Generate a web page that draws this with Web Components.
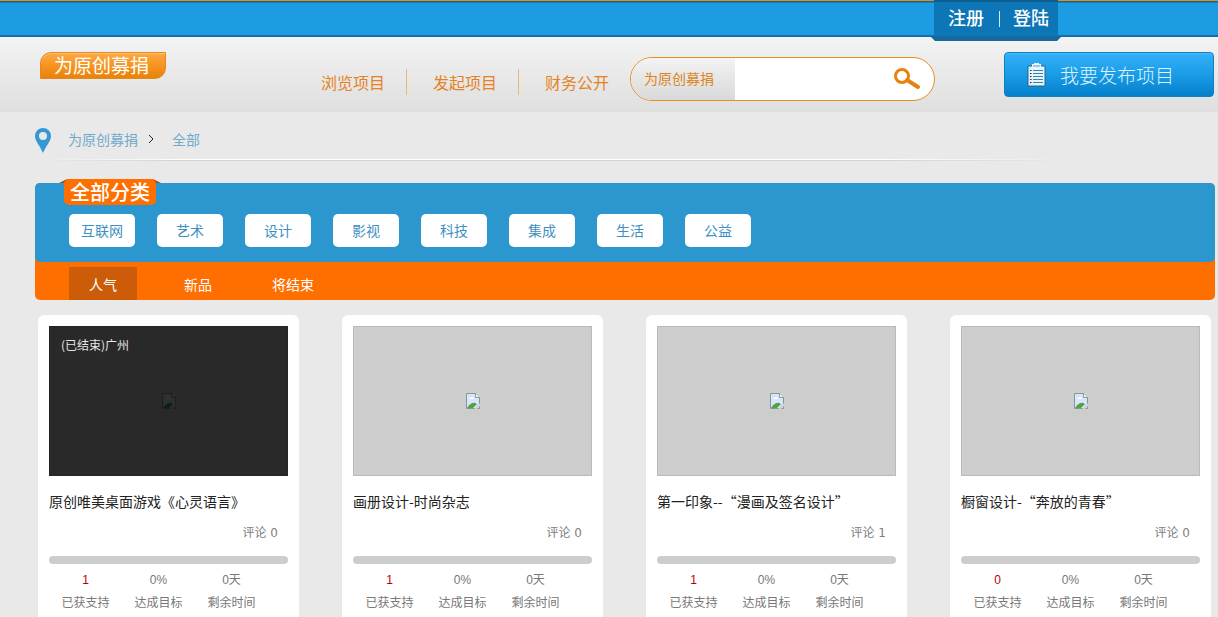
<!DOCTYPE html>
<html lang="zh-CN">
<head>
<meta charset="utf-8">
<title>为原创募捐</title>
<style>
html,body{margin:0}
body{font-family:"Noto Sans CJK SC","Liberation Sans",sans-serif;font-size:14px;background:#e9e9e9}
</style>
</head>
<body>
<fund-page></fund-page>
<script>
const define = (name, html, setup) => {
  const template = document.createElement('template');
  template.innerHTML = html;
  customElements.define(name, class extends HTMLElement {
    constructor() {
      super();
      this.attachShadow({mode: 'open'}).append(template.content.cloneNode(true));
    }
    connectedCallback() { if (setup) setup(this, this.shadowRoot); }
  });
};

define('account-bar', `
<style>
:host{display:block;position:relative;z-index:1;height:37px;box-sizing:border-box;padding-left:934px;background:linear-gradient(#b79a58 0 1px,#40565a 1px 2px,#1b7fb8 2px 3px,#1b9ce3 3px 35px,#186ea6 35px)}
nav{position:relative;display:flex;box-sizing:border-box;width:124px;height:37px;padding-left:14px;background:linear-gradient(#0d5f93 0 2px,#0c76b6 2px)}
nav::after{content:"";position:absolute;left:-4px;right:-4px;top:36px;height:5px;background:#1868a0;clip-path:polygon(0 0,100% 0,calc(100% - 5px) 100%,5px 100%)}
a{color:#fff;font-size:18px;font-weight:500;line-height:34px;text-decoration:none;white-space:nowrap}
a+a{margin-left:15px;padding-left:14px;background:linear-gradient(#d5eaf6,#d5eaf6) left 0 top 11px/1px 16px no-repeat}
</style>
<nav><a href="#register">注册</a><a href="#login">登陆</a></nav>`);

define('site-logo', `
<style>
:host{display:block}
a{display:block;box-sizing:border-box;width:126px;height:27px;padding-left:13px;border:1px solid #e58a1c;border-radius:11px 0 11px 0;background:linear-gradient(#fda944,#f7941f 50%,#e7830c);box-shadow:inset 0 1px #ffc274;color:#fff;font-size:19px;line-height:24px;text-decoration:none;white-space:nowrap}
</style>
<a href="#home"><slot></slot></a>`);

define('main-nav', `
<style>
:host{display:flex}
::slotted(a){padding:0 21px 0 26px;border-left:1px solid #efb47c;color:#e5821f;font-size:16px;line-height:26px;text-decoration:none;white-space:nowrap}
::slotted(a:first-child){padding-left:0;border:0}
::slotted(a:last-child){padding-right:0}
</style>
<slot></slot>`);

define('search-box', `
<style>
:host{display:block}
form{display:flex;box-sizing:border-box;width:305px;height:44px;border:1px solid #e88d25;border-radius:22px;background:#fff;overflow:hidden}
label{flex:none;box-sizing:border-box;width:104px;padding-left:13px;background:linear-gradient(#f3f3f3,#d9d9d9);color:#dc8522;font-size:14px;line-height:40px}
input{flex:1;min-width:0;border:0;padding:0 8px;outline:0;background:none;font:inherit}
button{flex:none;width:54px;border:0;padding:0;background:none}
svg{display:block;margin:0 12px 0 13px}
</style>
<form role="search">
<label for="q">为原创募捐</label><input id="q" type="text">
<button type="button" aria-label="搜索"><svg width="28" height="24" viewBox="0 0 28 24" fill="none" stroke="#e8820f"><circle cx="9" cy="9" r="6.500" stroke-width="3"/><path d="M14 13L25 20" stroke-width="4" stroke-linecap="round"/></svg></button>
</form>`);

define('publish-button', `
<style>
:host{display:block}
button{display:flex;align-items:center;gap:14px;width:210px;height:45px;box-sizing:border-box;padding:0 0 0 22px;border:1px solid #0f80c4;border-radius:4px;background:linear-gradient(#34b1f7,#1a9ce6 50%,#0580cb);box-shadow:inset 0 1px #4dbafa;color:#dff4ff;font-family:inherit;font-size:19px;font-weight:300;white-space:nowrap}
</style>
<button type="button"><svg width="19" height="24" viewBox="0 0 19 24"><path d="M1 3H5V1H7V0H12V1H14V3H18V23H1Z" fill="#e6f5fd"/><path d="M1 23V3H5M14 3H18V23H1" fill="none" stroke="#23648e"/><path d="M6 3H13" stroke="#5b9dc4"/><path d="M3 7.5H4.500M3 10.500H4.500M3 13.500H4.500M3 16.500H4.500M3 19.500H4.500" stroke="#222"/><path d="M6 7.500H16M6 10.500H16M6 13.500H16M6 16.500H16M6 19.500H16" stroke="#3684b2"/></svg><slot></slot></button>`);

define('site-header', `
<style>
:host{display:flex;align-items:flex-start;box-sizing:border-box;height:75px;padding:15px 4px 0 40px;background:linear-gradient(#f3f3f3,#dfdfdf)}
main-nav{margin:17px 21px 0 155px}
search-box{margin-top:5px}
publish-button{margin-left:auto}
</style>
<site-logo>为原创募捐</site-logo>
<main-nav><a href="#browse">浏览项目</a><a href="#start">发起项目</a><a href="#finance">财务公开</a></main-nav>
<search-box></search-box>
<publish-button>我要发布项目</publish-button>`);

define('crumb-trail', `
<style>
:host{display:block;margin-left:35px}
nav{display:flex;align-items:center;box-sizing:border-box;height:47px;padding-top:6px}
a{color:#72a9cb;font-size:14px;line-height:20px;text-decoration:none}
.pin{margin:4px 17px 0 0}
.arrow{margin:0 18px 0 10px}
hr{width:1040px;max-width:100%;height:2px;margin:0;border:0;background:linear-gradient(90deg,#e9e9e9,transparent 15%,transparent 80%,#e9e9e9),linear-gradient(#fff 1px,#d2d2d2 1px)}
</style>
<nav aria-label="位置">
<svg class="pin" width="16" height="25" viewBox="0 0 16 25"><path fill="#3499d3" fill-rule="evenodd" d="M8 0a8 8 0 0 1 8 8C16 13 11 18 8 25C5 18 0 13 0 8A8 8 0 0 1 8 0ZM8 4a4 4 0 1 0 0 8a4 4 0 1 0 0-8Z"/></svg>
<a href="#home">为原创募捐</a>
<svg class="arrow" width="6" height="10" viewBox="0 0 6 10"><path d="M1 1L5 5L1 9" fill="none" stroke="#222"/></svg>
<a href="#all">全部</a>
</nav><hr>`);

define('category-panel', `
<style>
:host{display:block;margin:22px 3px 0 35px;border-radius:5px;background:#ff6f00}
section{position:relative;box-sizing:border-box;height:79px;padding:31px 34px 0;border-radius:5px;background:#2c97ce}
h2{position:absolute;left:29px;top:-4px;box-sizing:border-box;width:92px;height:26px;margin:0;border-radius:5px;background:#ff6f00;color:#fff;font-size:20px;font-weight:500;line-height:25px;text-align:center}
h2::before,h2::after{content:"";position:absolute;top:0;width:8px;height:4px;background:#a94d0c;z-index:-1}
h2::before{left:-5px;clip-path:polygon(100% 0,100% 100%,0 100%)}
h2::after{right:-5px;clip-path:polygon(0 0,100% 100%,0 100%)}
.pills{display:flex;gap:22px}
a{font-size:14px;text-align:center;text-decoration:none}
.pills a{width:66px;border-radius:5px;background:#fff;color:#3d90c2;line-height:33px}
.tabs{display:flex;gap:27px;padding:5px 34px 0}
.tabs a{width:68px;height:33px;color:#fff;line-height:35px}
.tabs a[aria-current]{background:#cd5c09}
</style>
<section><h2>全部分类</h2><nav class="pills"></nav></section>
<nav class="tabs"><a href="#hot" aria-current="page">人气</a><a href="#new">新品</a><a href="#ending">将结束</a></nav>`,
(host, root) => {
  root.querySelector('.pills').innerHTML = ['互联网','艺术','设计','影视','科技','集成','生活','公益']
    .map(name => `<a href="#${name}">${name}</a>`).join('');
});

define('project-card', `
<style>
:host{display:block;box-sizing:border-box;padding:11px;border-radius:6px 6px 0 0;background:#fff;min-width:0}
.photo{position:relative;display:flex;align-items:center;justify-content:center;box-sizing:border-box;height:150px;border:1px solid #b9b9b9;background:#cdcdcd}
.shade{display:none}
:host([place]) .shade{display:block;position:absolute;inset:-1px;padding:9px 12px;background:rgba(0,0,0,.8);color:#e6e6e6;font-size:12px;line-height:20px}
h3{margin:14px 0 0;color:#222;font-size:14px;font-weight:400;line-height:22px;white-space:nowrap}
.comments{margin:11px 10px 0 0;color:#808080;font:12px/20px "DejaVu Sans","Noto Sans CJK SC",sans-serif;text-align:right}
progress{display:block;width:100%;height:8px;margin-top:13px;border:0;border-radius:4px;overflow:hidden;appearance:none;background:#cdcdcd}
progress::-webkit-progress-bar{background:#cdcdcd}
progress::-webkit-progress-value{background:#ff6f00}
dl{display:flex;margin:5px 0 0;color:#777;font-size:12px;line-height:22px;text-align:center}
dl div{display:flex;flex-direction:column-reverse;width:73px}
dd{margin:0;font-family:"Liberation Sans","Noto Sans CJK SC",sans-serif;font-size:12px}
.backers{color:#b80000}
</style>
<div class="photo"><svg width="14" height="16" viewBox="0 0 14 16"><path d="M.5 .5H9.500L13.500 4.500V15.500H.5Z" fill="#d6e5fb" stroke="#8c9299"/><path d="M9.500 .5V4.500H13.500" fill="#fff" stroke="#8c9299"/><path d="M3 6h5v-1H7V4H5v1H3Z" fill="#fff"/><path d="M1 15C3 12 6 9 9 10L11 11L7 15Z" fill="#4ea53c"/><path d="M8 16L14 10V13L11 16Z" fill="#cdcdcd"/></svg><div class="shade"></div></div>
<h3><slot></slot></h3>
<p class="comments"></p>
<progress value="0" max="100" aria-label="达成目标"></progress>
<dl><div><dt>已获支持</dt><dd class="backers"></dd></div><div><dt>达成目标</dt><dd>0%</dd></div><div><dt>剩余时间</dt><dd>0天</dd></div></dl>`,
(host, root) => {
  root.querySelector('.shade').textContent = host.getAttribute('place') || '';
  root.querySelector('.comments').textContent = '评论 ' + host.getAttribute('comments');
  root.querySelector('.backers').textContent = host.getAttribute('backers');
});

define('fund-page', `
<style>
:host{display:flex;flex-direction:column;min-height:100vh}
main{flex:1;display:flex;flex-direction:column;isolation:isolate}
.cards{flex:1;display:grid;grid-template-columns:repeat(4,minmax(0,1fr));gap:43px;margin:15px 7px 0 38px}
</style>
<account-bar></account-bar>
<site-header></site-header>
<main>
<crumb-trail></crumb-trail>
<category-panel></category-panel>
<div class="cards">
<project-card place="(已结束)广州" comments="0" backers="1">原创唯美桌面游戏《心灵语言》</project-card>
<project-card comments="0" backers="1">画册设计-时尚杂志</project-card>
<project-card comments="1" backers="1">第一印象--“漫画及签名设计”</project-card>
<project-card comments="0" backers="0">橱窗设计-“奔放的青春”</project-card>
</div>
</main>`);
</script>
</body>
</html>
